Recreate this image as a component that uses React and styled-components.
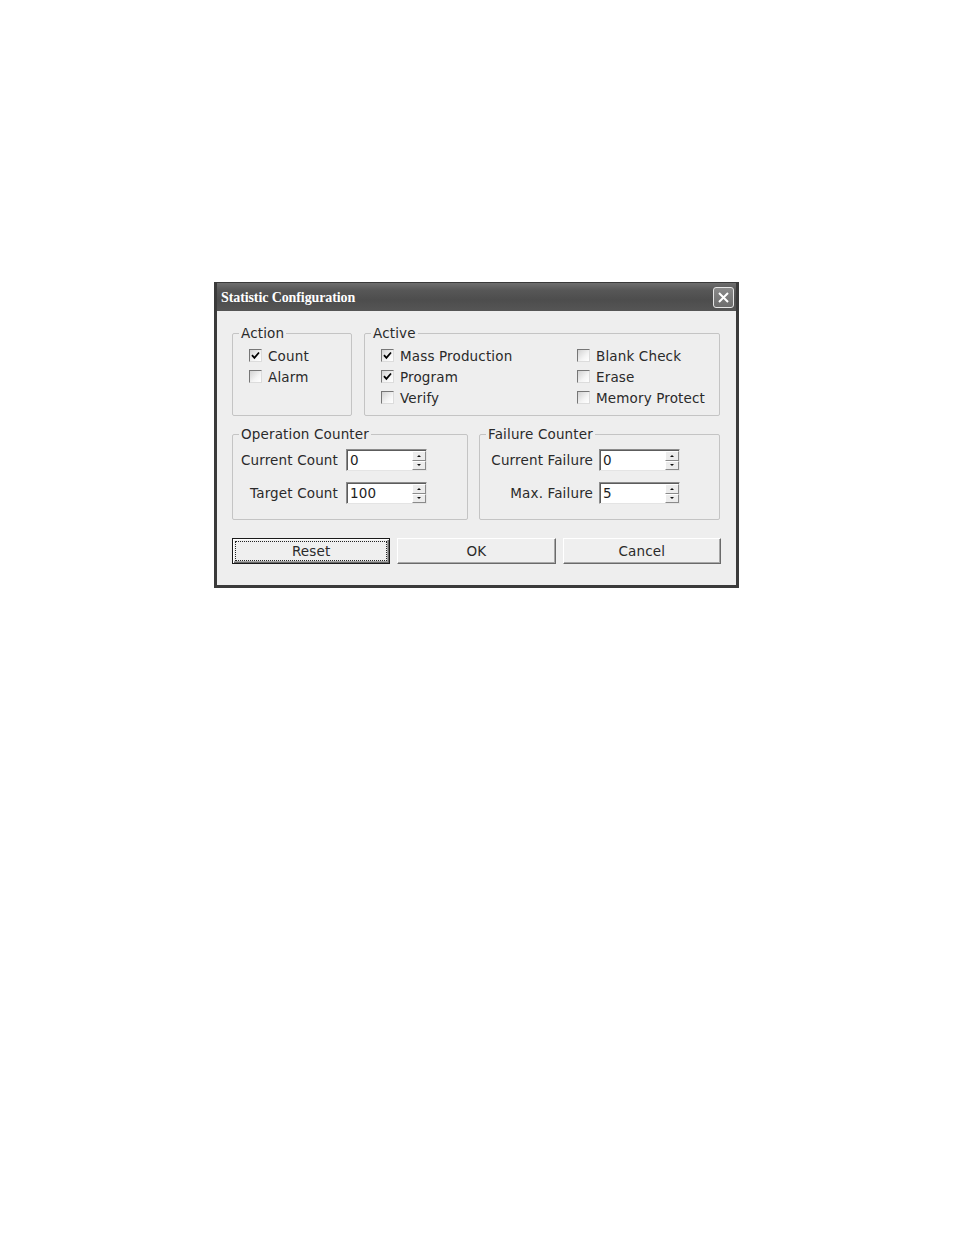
import React from "react";
import styled, { createGlobalStyle } from "styled-components";

const GlobalStyle = createGlobalStyle`
  html, body { margin: 0; padding: 0; background: #ffffff; }
  body { font-family: "DejaVu Sans", Verdana, sans-serif; letter-spacing: 0.15px; }
  * { box-sizing: border-box; }
`;

const Page = styled.div`
  width: 954px;
  height: 1235px;
  padding: 282px 0 0 214px;
`;

const Dialog = styled.div`
  width: 525px;
  height: 306px;
  border: 3px solid #3a3a3a;
  border-top: 1px solid #3a3a3a;
  background: #eeeeee;
  display: flex;
  flex-direction: column;
`;

const TitleBar = styled.div`
  height: 28px;
  flex: none;
  display: flex;
  align-items: center;
  justify-content: space-between;
  padding: 1px 2px 0 4px;
  background: linear-gradient(#6e6e6e 0%, #575757 25%, #4d4d4d 60%, #555555 100%);
`;

const Title = styled.span`
  font-family: "Liberation Serif", "DejaVu Serif", serif;
  font-weight: bold;
  font-size: 14px;
  color: #ffffff;
  letter-spacing: -0.1px;
`;

const CloseButton = styled.div`
  width: 21px;
  height: 21px;
  border: 1px solid #e6e6e6;
  border-radius: 3px;
  background: linear-gradient(#8a8a8a, #6c6c6c);
  display: flex;
  align-items: center;
  justify-content: center;
`;

const Body = styled.div`
  flex: 1;
  padding: 14px 15px 0 15px;
  display: flex;
  flex-direction: column;
`;

const GroupRow = styled.div`
  display: flex;
  gap: ${(p) => p.$gap}px;
  margin-bottom: ${(p) => p.$mb}px;
`;

const Group = styled.fieldset`
  margin: 0;
  padding: 0;
  width: ${(p) => p.$w}px;
  flex: none;
  min-width: 0;
  border: 1px solid #c4c4c4;
  border-radius: 2px;
`;

const Legend = styled.legend`
  margin-left: 6px;
  padding: 0 2px;
  font-size: 13.5px;
  line-height: 16px;
  color: #2a2a2a;
`;

const CheckList = styled.div`
  display: grid;
  grid-template-columns: ${(p) => p.$cols};
  grid-auto-rows: 21px;
  padding: 4px 0 7px 16px;
`;

const CheckRow = styled.label`
  display: flex;
  align-items: center;
  gap: 6px;
  font-size: 13.5px;
  color: #2a2a2a;
  white-space: nowrap;
`;

const Box = styled.span`
  width: 13px;
  height: 13px;
  flex: none;
  border-top: 1px solid #767676;
  border-left: 1px solid #767676;
  border-right: 1px solid #dcdcdc;
  border-bottom: 1px solid #dcdcdc;
  background: linear-gradient(135deg, #d2d2d2 0%, #f4f4f4 60%, #ffffff 100%);
  display: flex;
  align-items: center;
  justify-content: center;
`;

const FieldGrid = styled.div`
  display: grid;
  grid-template-columns: ${(p) => p.$lw}px 81px;
  column-gap: ${(p) => p.$gap}px;
  row-gap: 11px;
  grid-auto-rows: 22px;
  padding: 7px 0 15px 0;
`;

const FieldLabel = styled.span`
  font-size: 13.5px;
  color: #2a2a2a;
  text-align: right;
  align-self: center;
  white-space: nowrap;
`;

const Spin = styled.div`
  display: flex;
  height: 22px;
  background: #ffffff;
  border-top: 1px solid #8c8c8c;
  border-left: 1px solid #8c8c8c;
  border-right: 1px solid #e4e4e4;
  border-bottom: 1px solid #e4e4e4;
  box-shadow: inset 1px 1px 0 #5c5c5c;
  padding: 1px 0 0 1px;
`;

const SpinValue = styled.span`
  flex: 1;
  font-size: 13.5px;
  color: #1e1e1e;
  padding-left: 2px;
  line-height: 19px;
`;

const SpinButtons = styled.div`
  width: 14px;
  display: flex;
  flex-direction: column;
`;

const SpinButton = styled.div`
  flex: 1;
  background: #ececec;
  border-top: 1px solid #ffffff;
  border-left: 1px solid #ffffff;
  border-right: 1px solid #8a8a8a;
  border-bottom: 1px solid #8a8a8a;
  display: flex;
  align-items: center;
  justify-content: center;
`;

const Arrow = styled.span`
  width: 0;
  height: 0;
  border-left: 2px solid transparent;
  border-right: 2px solid transparent;
  ${(p) =>
    p.$up
      ? "border-bottom: 2px solid #111;"
      : "border-top: 2px solid #111;"}
`;

const ButtonRow = styled.div`
  display: grid;
  grid-template-columns: 1fr 1fr 1fr;
  column-gap: 7px;
  margin-top: 18px;
`;

const Button = styled.div`
  height: 26px;
  display: flex;
  align-items: center;
  justify-content: center;
  font-size: 13.5px;
  color: #2a2a2a;
  background: #efefef;
  border-top: 1px solid #ffffff;
  border-left: 1px solid #ffffff;
  border-right: 1px solid #6a6a6a;
  border-bottom: 1px solid #6a6a6a;
  box-shadow: inset -1px -1px 0 #a8a8a8;
  ${(p) =>
    p.$default &&
    `
    border: 1px solid #1a1a1a;
    box-shadow: inset 1px 1px 0 #ffffff, inset -1px -1px 0 #6a6a6a, inset -2px -2px 0 #a8a8a8;
    outline: 1px dotted #222;
    outline-offset: -4px;
  `}
`;

const Check = ({ checked, children }) => (
  <CheckRow>
    <Box>
      {checked && (
        <svg width="9" height="9" viewBox="0 0 9 9">
          <path d="M1 4.2 L3.4 6.8 L8 1.5" fill="none" stroke="#000" strokeWidth="1.8" />
        </svg>
      )}
    </Box>
    {children}
  </CheckRow>
);

const SpinBox = ({ value }) => (
  <Spin>
    <SpinValue>{value}</SpinValue>
    <SpinButtons>
      <SpinButton>
        <Arrow $up />
      </SpinButton>
      <SpinButton>
        <Arrow />
      </SpinButton>
    </SpinButtons>
  </Spin>
);

export default function App() {
  return (
    <Page>
      <GlobalStyle />
      <Dialog>
        <TitleBar>
          <Title>Statistic Configuration</Title>
          <CloseButton>
            <svg width="13" height="13" viewBox="0 0 13 13">
              <path d="M2 2 L11 11 M11 2 L2 11" stroke="#fff" strokeWidth="2" />
            </svg>
          </CloseButton>
        </TitleBar>
        <Body>
          <GroupRow $mb={10} $gap={12}>
            <Group $w={120}>
              <Legend>Action</Legend>
              <CheckList $cols="1fr">
                <Check checked>Count</Check>
                <Check>Alarm</Check>
              </CheckList>
            </Group>
            <Group $w={356}>
              <Legend>Active</Legend>
              <CheckList $cols="196px 1fr">
                <Check checked>Mass Production</Check>
                <Check>Blank Check</Check>
                <Check checked>Program</Check>
                <Check>Erase</Check>
                <Check>Verify</Check>
                <Check>Memory Protect</Check>
              </CheckList>
            </Group>
          </GroupRow>
          <GroupRow $mb={0} $gap={11}>
            <Group $w={236}>
              <Legend>Operation Counter</Legend>
              <FieldGrid $lw={105} $gap={8}>
                <FieldLabel>Current Count</FieldLabel>
                <SpinBox value="0" />
                <FieldLabel>Target Count</FieldLabel>
                <SpinBox value="100" />
              </FieldGrid>
            </Group>
            <Group $w={241}>
              <Legend>Failure Counter</Legend>
              <FieldGrid $lw={113} $gap={6}>
                <FieldLabel>Current Failure</FieldLabel>
                <SpinBox value="0" />
                <FieldLabel>Max. Failure</FieldLabel>
                <SpinBox value="5" />
              </FieldGrid>
            </Group>
          </GroupRow>
          <ButtonRow>
            <Button $default>Reset</Button>
            <Button>OK</Button>
            <Button>Cancel</Button>
          </ButtonRow>
        </Body>
      </Dialog>
    </Page>
  );
}
